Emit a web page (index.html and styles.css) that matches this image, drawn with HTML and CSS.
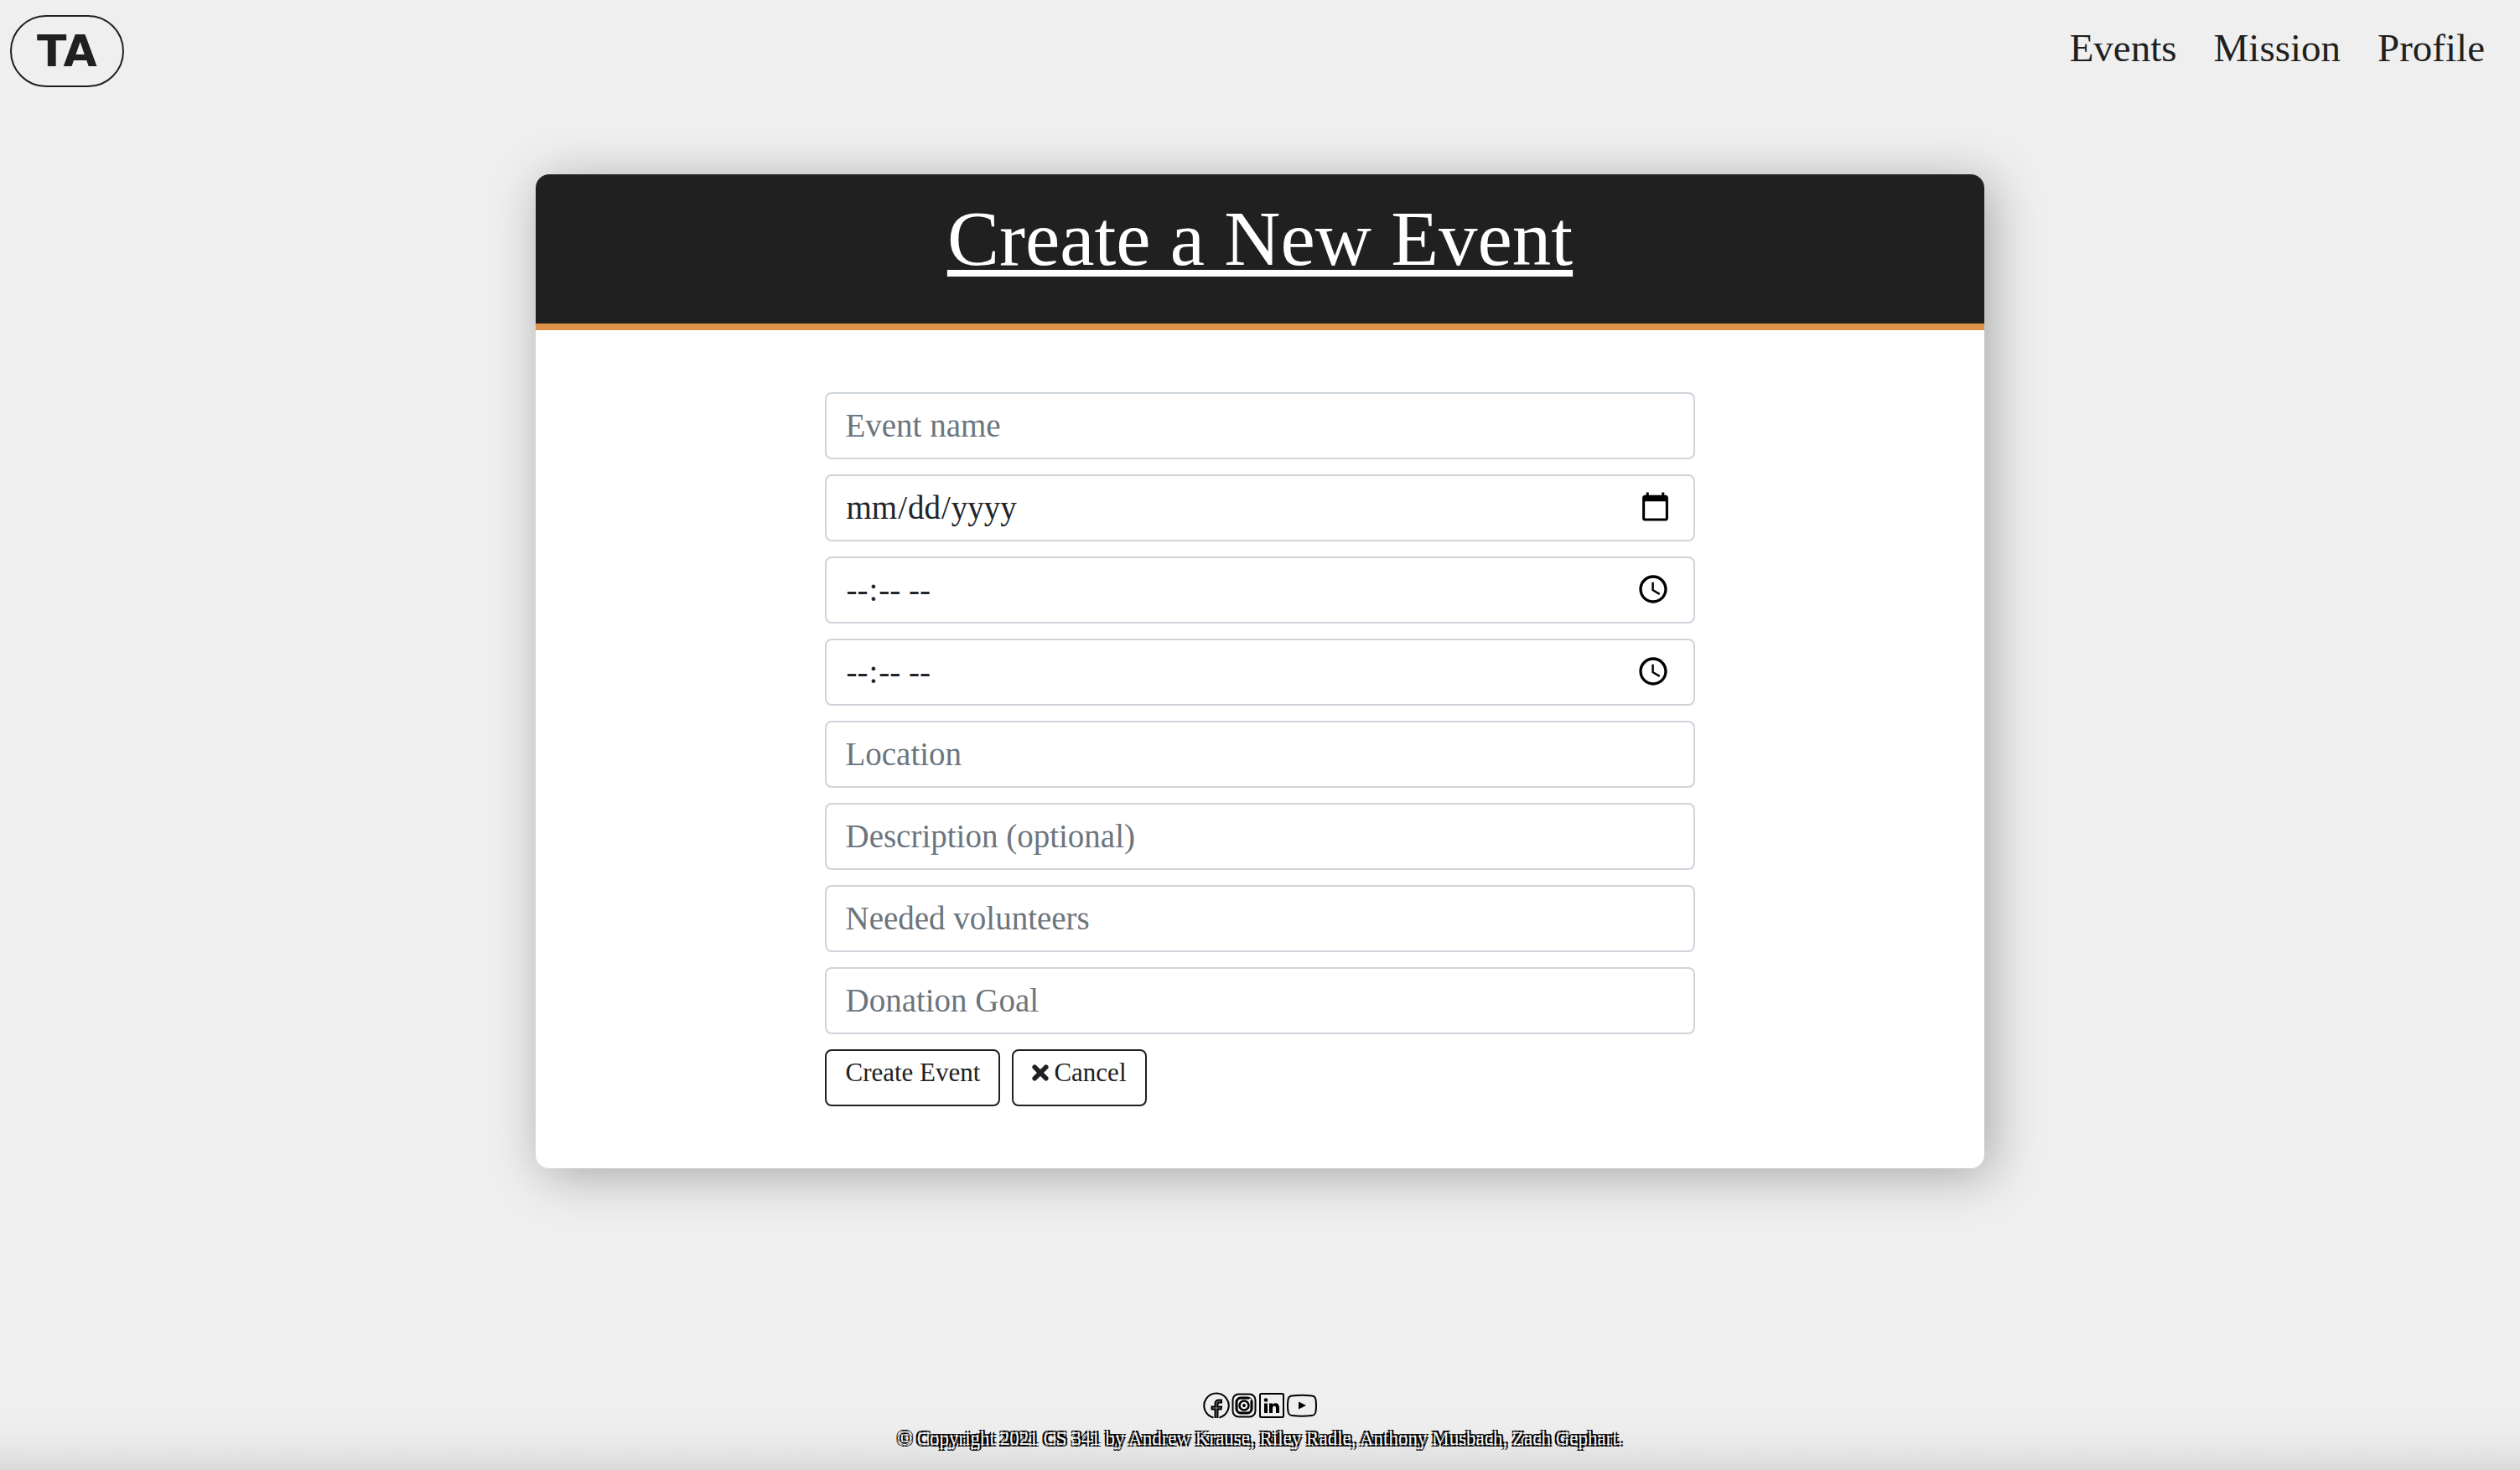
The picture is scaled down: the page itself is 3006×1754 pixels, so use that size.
FILE: index.html
```html
<!DOCTYPE html>
<html lang="en">
<head>
  <meta charset="utf-8">
  <meta name="viewport" content="width=device-width, initial-scale=1">
  <title>Create a New Event</title>
  <link rel="stylesheet" href="styles.css">
</head>
<body>
  <header class="navbar">
    <a class="brand" href="#">TA</a>
    <nav class="nav-links">
      <a href="#">Events</a>
      <a href="#">Mission</a>
      <a href="#">Profile</a>
    </nav>
  </header>

  <main class="card">
    <div class="card-header">
      <h1 class="card-title">Create a New Event</h1>
    </div>
    <form class="event-form">
      <input class="field" type="text" placeholder="Event name" aria-label="Event name">
      <input class="field" type="date" aria-label="Date">
      <input class="field" type="time" aria-label="Start time">
      <input class="field" type="time" aria-label="End time">
      <input class="field" type="text" placeholder="Location" aria-label="Location">
      <input class="field" type="text" placeholder="Description (optional)" aria-label="Description">
      <input class="field" type="text" placeholder="Needed volunteers" aria-label="Needed volunteers">
      <input class="field" type="text" placeholder="Donation Goal" aria-label="Donation Goal">
      <div class="actions">
        <button class="btn" type="submit">Create Event</button>
        <button class="btn" type="button">
          <svg class="btn-icon" viewBox="0 0 20 20" aria-hidden="true"><path d="M3.200 3.200L16.800 16.800M16.800 3.200L3.200 16.800" stroke="currentColor" stroke-width="5.600" stroke-linecap="round"/></svg>
          Cancel
        </button>
      </div>
    </form>
  </main>

  <footer class="footer">
    <div class="social">
      <a href="#" aria-label="Facebook">
        <svg width="32" height="32" viewBox="0 0 32 32" fill="none" stroke="#000" stroke-width="2">
          <path d="M12.500 30.500A14.700 14.700 0 1 1 19.500 30.500"/>
          <path d="M14.500 31V20.500H10.500V17.500H14.500V14Q14.500 9.500 19 9.500H22V12.500H19.500Q17.500 12.500 17.500 14.500V17.500H22L21.500 20.500H17.500V31" fill="#888"/>
        </svg>
      </a>
      <a href="#" aria-label="Instagram">
        <svg width="30" height="32" viewBox="0 0 30 32" fill="none" stroke="#000">
          <rect x="1.500" y="2.500" width="27" height="27" rx="7" stroke-width="2"/>
          <rect x="6" y="7" width="18" height="18" rx="5" stroke-width="3"/>
          <circle cx="15" cy="16" r="5.500" stroke-width="2.500"/>
          <circle cx="15" cy="16" r="1.500" fill="#000"/>
          <circle cx="22" cy="9" r="1.500" fill="#eee" stroke="none"/>
        </svg>
      </a>
      <a href="#" aria-label="LinkedIn">
        <svg width="32" height="32" viewBox="0 0 32 32">
          <rect x="2" y="2" width="28" height="28" rx="1.500" fill="none" stroke="#000" stroke-width="2"/>
          <circle cx="9" cy="9.500" r="2.300"/>
          <path d="M7 13.500h4V25H7zM13 13.500h4V15c2-3 8-2.500 8 3.500V25h-4v-6c0-3.500-4-3.500-4 0v6h-4z"/>
        </svg>
      </a>
      <a href="#" aria-label="YouTube">
        <svg width="36" height="32" viewBox="0 0 36 32">
          <path d="M6 4.500Q18 3 30 4.500Q34 5 34.500 9Q35.500 16 34.500 23Q34 27.500 30 28Q18 29.500 6 28Q2 27.500 1.500 23Q.500 16 1.500 9Q2 5 6 4.500Z" fill="none" stroke="#000" stroke-width="2"/>
          <path d="M14 11.500L23 16L14 20.500Z"/>
        </svg>
      </a>
    </div>
    <p class="copyright">© Copyright 2021 CS 341 by Andrew Krause, Riley Radle, Anthony Musbach, Zach Gephart.</p>
  </footer>
</body>
</html>
```

FILE: styles.css
```css
* {
  box-sizing: border-box;
}

body {
  margin: 0;
  min-height: 100vh;
  display: flex;
  flex-direction: column;
  background: #efefef;
  color: #202020;
  font-family: "Liberation Serif", serif;
}

.navbar {
  display: flex;
  justify-content: space-between;
  align-items: flex-start;
  padding: 18px 42px 0 12px;
}

.brand {
  padding: 0 30px;
  border: 2px solid #202020;
  border-radius: 44px;
  color: inherit;
  font: 700 52px/82px "DejaVu Sans", sans-serif;
  text-decoration: none;
}

.nav-links {
  display: flex;
  gap: 44px;
  padding-top: 11px;
}

.nav-links a {
  color: inherit;
  font-size: 47px;
  line-height: 56px;
  text-decoration: none;
}

.card {
  width: 57.5%;
  margin: 104px auto 0;
  overflow: hidden;
  border-radius: 16px;
  background: #fff;
  box-shadow: 8px 8px 60px rgba(0, 0, 0, 0.3);
}

.card-header {
  padding: 21px 0 45px;
  border-bottom: 8px solid #df9049;
  background: #202020;
}

.card-title {
  margin: 0;
  color: #fff;
  font-size: 93px;
  font-weight: 400;
  line-height: 112px;
  text-align: center;
  text-decoration: underline;
  text-decoration-skip-ink: none;
  text-decoration-thickness: 8px;
  text-underline-offset: 6px;
}

.event-form {
  display: flex;
  flex-direction: column;
  gap: 18px;
  width: 60%;
  margin: 0 auto;
  padding: 74px 0;
}

.field {
  width: 100%;
  height: 80px;
  padding: 10px 24px 12px 22px;
  border: 2px solid #ced4da;
  border-radius: 8px;
  background: #fff;
  color: #212529;
  font-family: inherit;
  font-size: 39px;
}

.field::placeholder {
  color: #6c757d;
  opacity: 1;
}

.actions {
  display: flex;
  gap: 14px;
}

.btn {
  display: flex;
  align-items: center;
  gap: 6px;
  padding: 6px 22px 18px;
  border: 2px solid #202020;
  border-radius: 8px;
  background: #fff;
  color: #202020;
  font-family: inherit;
  font-size: 31px;
  line-height: 40px;
}

.btn-icon {
  width: 20px;
  height: 20px;
}

.footer {
  display: flex;
  flex-direction: column;
  align-items: center;
  gap: 8px;
  margin-top: auto;
  padding-bottom: 21px;
  background: linear-gradient(to top, #dadada, #e6e6e6 24px, #ececec 44px, #efefef 72px);
}

.social {
  display: flex;
  gap: 2px;
}

.social svg {
  display: block;
}

.copyright {
  margin: 0;
  color: #f4f4f4;
  font-size: 23px;
  line-height: 32px;
  text-shadow: -2px -2px 0 #000, 2px -2px 0 #000, -2px 2px 0 #000, 2px 2px 0 #000;
}
```
